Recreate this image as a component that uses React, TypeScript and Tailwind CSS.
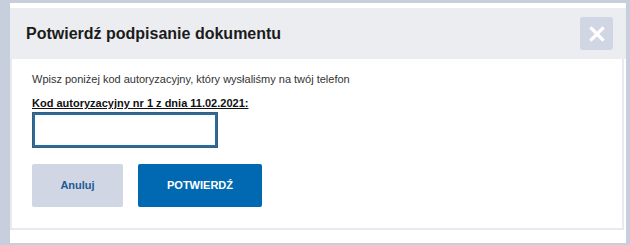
export default function App() {
  return (
    <div
      className="h-[245px] w-[630px] overflow-hidden bg-[#c7cfdd] pl-[10px] pr-[4px] pt-[3px]"
      style={{ fontFamily: '"Liberation Sans", Arial, sans-serif' }}
    >
      <div className="flex h-[240px] flex-col bg-white pt-[5px]">
        <div className="flex h-[51px] items-center justify-between bg-[#ebedf1] pl-[16px] pr-[13px]">
          <h2 className="text-[16px] font-bold text-[#1b1b1b]">Potwierdź podpisanie dokumentu</h2>
          <button
            type="button"
            className="flex h-[33px] w-[33px] items-center justify-center rounded-[3px] bg-[#d0d6e3]"
          >
            <svg width="16" height="16" viewBox="0 0 16 16">
              <path d="M2.5 2.5 L13.5 13.5 M13.5 2.5 L2.5 13.5" stroke="white" strokeWidth="3.2" strokeLinecap="square" />
            </svg>
          </button>
        </div>
        <div className="mr-[2px] h-[171px] border-2 border-t-0 border-[#e9eaf0] pl-[20px] pt-[13px]">
          <p className="text-[11px] leading-[14px] text-[#333]">
            Wpisz poniżej kod autoryzacyjny, który wysłaliśmy na twój telefon
          </p>
          <label
            htmlFor="code"
            className="mt-[10px] block text-[11px] font-bold leading-[14px] text-[#111] underline"
          >
            Kod autoryzacyjny nr 1 z dnia 11.02.2021:
          </label>
          <input
            id="code"
            type="text"
            className="mt-[2px] block h-[36px] w-[186px] border border-[#555] bg-white outline-none ring-2 ring-inset ring-[#1a6fb5]"
          />
          <div className="mt-[16px] flex gap-[15px]">
            <button
              type="button"
              className="h-[43px] w-[91px] rounded-[2px] bg-[#d0d6e3] text-[11px] font-bold text-[#1d5a96]"
            >
              Anuluj
            </button>
            <button
              type="button"
              className="h-[43px] w-[124px] rounded-[2px] bg-[#0069b1] text-[11px] font-bold text-white"
            >
              POTWIERDŹ
            </button>
          </div>
        </div>
      </div>
    </div>
  );
}
